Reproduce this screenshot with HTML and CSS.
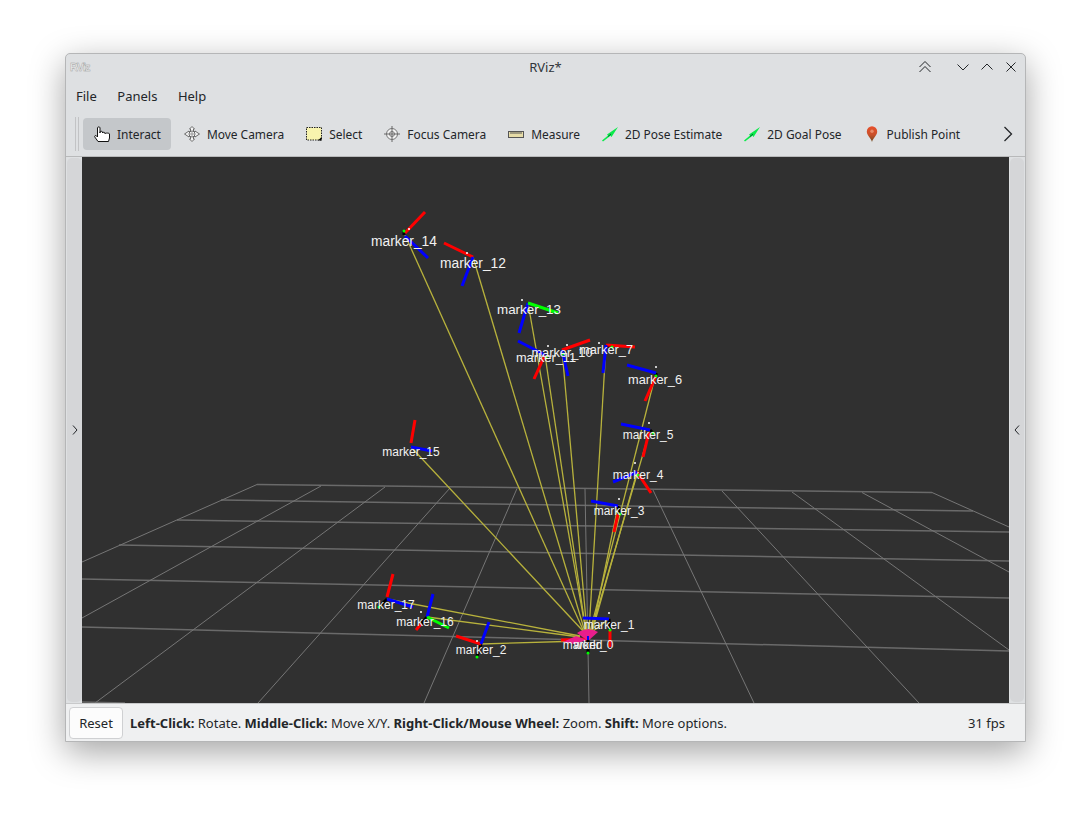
FILE: index.html
```html
<!DOCTYPE html>
<html lang="en">
<head>
    <meta charset="UTF-8">
    <title>RViz*</title>
    <link rel="stylesheet" href="styles.css">
</head>
<body>
<div class="window">
    <!-- title bar -->
    <div class="titlebar">
        <span class="app-logo">RViz</span>
        <span class="title">RViz*</span>
        <div class="win-buttons">
            <svg class="win-btn keep" width="14" height="14" viewBox="0 0 14 14"><path d="M1.5 7 7 1.5 12.5 7M1.5 12 7 6.5 12.5 12"/></svg>
            <svg class="win-btn" width="14" height="14" viewBox="0 0 14 14"><path d="M1.5 4.5 7 10 12.5 4.5"/></svg>
            <svg class="win-btn" width="14" height="14" viewBox="0 0 14 14"><path d="M1.5 9.5 7 4 12.5 9.5"/></svg>
            <svg class="win-btn" width="14" height="14" viewBox="0 0 14 14"><path d="M2.5 2.5 11.5 11.5M11.5 2.5 2.5 11.5"/></svg>
        </div>
    </div>

    <div class="menubar">
        <span>File</span>
        <span>Panels</span>
        <span>Help</span>
    </div>

    <div class="toolbar">
        <div class="grip"></div>
        <div class="tool active">
            <svg width="16" height="16" viewBox="0 0 16 16"><path d="M4 15.5 .8 11C.2 10 1.500 9 2.400 9.800L3.500 11V1.800C3.500 .6 6 .6 6 1.800V7 6C6 5 8.500 5 8.500 6V7C8.500 6 11 6 11 7V7.800C11 6.800 15.500 6.800 15.500 8V12L14.500 15.500Z" fill="#fff" stroke="#111"/></svg>
            <span>Interact</span>
        </div>
        <div class="tool">
            <svg width="16" height="16" viewBox="0 0 16 16" fill="none" stroke="#6a6a6a"><path d="M8 .5 10.500 3H9.500V5L11 6V5L15.500 8 11 11V10L9.500 11V13H10.500L8 15.500 5.500 13H6.500V11L5 10V11L.5 8 5 5V6L6.500 5V3H5.500Z" fill="#f4f4f4"/><circle cx="8" cy="8" r="3"/><path d="M5 8H11M8 5V11" stroke="#999"/></svg>
            <span>Move Camera</span>
        </div>
        <div class="tool">
            <svg width="16" height="16" viewBox="0 0 16 16"><rect x=".5" y="1.500" width="15" height="12.500" fill="#f8f4ae" stroke="#222" stroke-dasharray="1.500 1"/><path d="M12 14.500H15.500V11Z" fill="#000"/></svg>
            <span>Select</span>
        </div>
        <div class="tool">
            <svg width="16" height="16" viewBox="0 0 16 16" fill="none" stroke="#777"><circle cx="8" cy="8" r="5.500" fill="#f2f2f2"/><circle cx="8" cy="8" r="2.500"/><path d="M8 0V16M0 8H16" stroke="#666"/></svg>
            <span>Focus Camera</span>
        </div>
        <div class="tool">
            <svg width="16" height="16" viewBox="0 0 16 16"><rect x=".5" y="5.500" width="15" height="6" fill="#e6dca8" stroke="#555"/><path d="M3 6V8M5 6V8M7 6V8M9 6V8M11 6V8M13 6V8" stroke="#555"/></svg>
            <span>Measure</span>
        </div>
        <div class="tool">
            <svg width="16" height="16" viewBox="0 0 16 16"><path d="M0 14.500 6 9.500 5 8.500 16 1 9.500 11 8.500 9.800 1 15.500Z" fill="#0bea4a"/><path d="M6 10.500 9 8" stroke="#063"/></svg>
            <span>2D Pose Estimate</span>
        </div>
        <div class="tool">
            <svg width="16" height="16" viewBox="0 0 16 16"><path d="M0 14.500 6 9.500 5 8.500 16 1 9.500 11 8.500 9.800 1 15.500Z" fill="#0bea4a"/><path d="M6 10.500 9 8" stroke="#063"/></svg>
            <span>2D Goal Pose</span>
        </div>
        <div class="tool pin">
            <svg width="12" height="16" viewBox="0 0 12 16"><defs><linearGradient id="pin" x1="0" y1="0" x2="0" y2="1"><stop offset="0" stop-color="#e8502c"/><stop offset=".55" stop-color="#c8502a"/><stop offset="1" stop-color="#6a4a20"/></linearGradient></defs><path d="M6 16C5 12 .8 9.500 .8 5.500A5.200 5.200 0 0 1 11.200 5.500C11.200 9.500 7 12 6 16Z" fill="url(#pin)"/><circle cx="6" cy="5.200" r="1.700" fill="#e88a68"/></svg>
            <span>Publish Point</span>
        </div>
        <svg class="more" width="10" height="16" viewBox="0 0 10 16"><path d="M1.500 1 8.500 8 1.500 15"/></svg>
    </div>

    <div class="main">
        <div class="dock-handle">
            <svg width="6" height="10" viewBox="0 0 6 10"><path d="M1 .5 5 5 1 9.500"/></svg>
        </div>

        <svg class="viewport" width="927" height="546" viewBox="82 157 927 546">
            <g class="grid-h">
                <line x1="257" y1="484.500" x2="932" y2="492.500"/>
                <line x1="221" y1="500" x2="973" y2="511"/>
                <line x1="177" y1="520" x2="1009" y2="532"/>
                <line x1="119" y1="545" x2="1009" y2="561"/>
                <line x1="82" y1="579" x2="1009" y2="598"/>
                <line x1="82" y1="627" x2="1009" y2="651"/>
                <line x1="82" y1="702" x2="125" y2="703"/>
            </g>
            <g class="grid-v">
                <line x1="257" y1="484.500" x2="82" y2="562"/>
                <line x1="321" y1="486" x2="82" y2="618"/>
                <line x1="385" y1="487" x2="95" y2="703"/>
                <line x1="450" y1="488" x2="258" y2="703"/>
                <line x1="517" y1="488.500" x2="424" y2="703"/>
                <line x1="585" y1="489" x2="589" y2="703"/>
                <line x1="653" y1="490" x2="754" y2="703"/>
                <line x1="722" y1="491" x2="919" y2="703"/>
                <line x1="792" y1="492" x2="1009" y2="650"/>
                <line x1="862" y1="492.500" x2="1009" y2="572"/>
                <line x1="932" y1="492.500" x2="1009" y2="527"/>
            </g>

            <!-- links from the base to each marker -->
            <g class="links">
                <line x1="405" y1="235" x2="584" y2="632"/>
                <line x1="473" y1="257" x2="585" y2="632"/>
                <line x1="528" y1="303" x2="586" y2="632"/>
                <line x1="545" y1="355" x2="586" y2="632"/>
                <line x1="562" y1="350" x2="587" y2="632"/>
                <line x1="606" y1="345" x2="589" y2="632"/>
                <line x1="656" y1="373" x2="590" y2="632"/>
                <line x1="650" y1="430" x2="591" y2="632"/>
                <line x1="637" y1="472" x2="592" y2="632"/>
                <line x1="618" y1="506" x2="592" y2="632"/>
                <line x1="609" y1="619" x2="592" y2="632"/>
                <line x1="411" y1="447" x2="584" y2="632"/>
                <line x1="387" y1="599" x2="580" y2="636"/>
                <line x1="427" y1="617" x2="580" y2="637"/>
                <line x1="481" y1="644" x2="582" y2="641"/>
            </g>

            <g class="axis-k">
                <line x1="404" y1="235" x2="404" y2="231"/>
                <line x1="481" y1="644" x2="477" y2="656"/>
                <line x1="387" y1="599" x2="379" y2="607"/>
                <line x1="545" y1="355" x2="546" y2="357"/>
                <line x1="562" y1="350" x2="563" y2="354"/>
                <line x1="606" y1="345" x2="612" y2="347"/>
                <line x1="656" y1="373" x2="656" y2="376"/>
                <line x1="650" y1="430" x2="653" y2="433"/>
                <line x1="637" y1="472" x2="638" y2="475"/>
                <line x1="618" y1="506" x2="620" y2="514"/>
                <line x1="609" y1="619" x2="610" y2="630"/>
                <line x1="427" y1="617" x2="421" y2="624"/>
            </g>
            <g class="axis-r">
                <line x1="405" y1="233" x2="425" y2="212"/>
                <line x1="473" y1="257" x2="444" y2="243"/>
                <line x1="545" y1="355" x2="534" y2="379"/>
                <line x1="562" y1="350" x2="590" y2="340"/>
                <line x1="606" y1="345" x2="635" y2="347"/>
                <line x1="656" y1="376" x2="645" y2="401"/>
                <line x1="649" y1="432" x2="643" y2="457"/>
                <line x1="637" y1="472" x2="651" y2="493"/>
                <line x1="618" y1="514" x2="614" y2="532"/>
                <line x1="411" y1="443" x2="415" y2="420"/>
                <line x1="387" y1="597" x2="393" y2="574"/>
                <line x1="481" y1="644" x2="456" y2="636"/>
                <line x1="610" y1="630" x2="610" y2="647"/>
                <line x1="588" y1="639" x2="561" y2="640"/>
                <line x1="421" y1="624" x2="416" y2="630"/>
            </g>
            <g class="axis-b">
                <line x1="405" y1="236" x2="428" y2="258"/>
                <line x1="473" y1="257" x2="462" y2="286"/>
                <line x1="528" y1="303" x2="519" y2="333"/>
                <line x1="545" y1="355" x2="518" y2="341"/>
                <line x1="562" y1="350" x2="568" y2="376"/>
                <line x1="606" y1="345" x2="603" y2="373"/>
                <line x1="656" y1="373" x2="627" y2="365"/>
                <line x1="650" y1="430" x2="621" y2="424"/>
                <line x1="637" y1="472" x2="613" y2="482"/>
                <line x1="618" y1="506" x2="591" y2="501"/>
                <line x1="411" y1="447" x2="432" y2="451"/>
                <line x1="387" y1="599" x2="413" y2="607"/>
                <line x1="427" y1="617" x2="433" y2="594"/>
                <line x1="481" y1="644" x2="489" y2="622"/>
                <line x1="609" y1="619" x2="583" y2="618"/>
            </g>
            <g class="axis-g">
                <line x1="528" y1="303" x2="558" y2="313"/>
                <line x1="427" y1="617" x2="449" y2="628"/>
            </g>

            <!-- pink arrows at the base -->
            <path class="arrow" d="M577 633Q588 626 598 632L588 641Z"/>
            <path class="arrow" d="M563 642 576 636 587 640 575 644Z"/>
            <g class="axis-k">
                <line x1="588" y1="640" x2="588" y2="653"/>
            </g>
            <line class="base-z" x1="588" y1="636" x2="588" y2="640"/>

            <g class="dots-g">
                <circle cx="404" cy="231" r="1.500"/>
                <circle cx="546" cy="357" r="1.500"/>
                <circle cx="563" cy="354" r="1.500"/>
                <circle cx="612" cy="347" r="1.500"/>
                <circle cx="656" cy="376" r="1.500"/>
                <circle cx="653" cy="433" r="1.500"/>
                <circle cx="638" cy="475" r="1.500"/>
                <circle cx="620" cy="514" r="1.500"/>
                <circle cx="379" cy="607" r="1.500"/>
                <circle cx="477" cy="657" r="1.500"/>
                <circle cx="610" cy="630" r="1.500"/>
                <circle cx="588" cy="653" r="1.500"/>
            </g>
            <g class="dots-w">
                <circle cx="409" cy="229" r="1"/>
                <circle cx="467" cy="253" r="1"/>
                <circle cx="522" cy="300" r="1"/>
                <circle cx="548" cy="346" r="1"/>
                <circle cx="567" cy="345" r="1"/>
                <circle cx="599" cy="343" r="1"/>
                <circle cx="656" cy="367" r="1"/>
                <circle cx="649" cy="423" r="1"/>
                <circle cx="635" cy="463" r="1"/>
                <circle cx="619" cy="499" r="1"/>
                <circle cx="609" cy="613" r="1"/>
                <circle cx="421" cy="612" r="1"/>
                <circle cx="477" cy="641" r="1"/>
            </g>

            <g class="labels">
                <text class="s14" x="404" y="246">marker_14</text>
                <text class="s14" x="473" y="268">marker_12</text>
                <text class="s135" x="529" y="314">marker_13</text>
                <text class="s13" x="546" y="362">marker_11</text>
                <text class="s13" x="562" y="357">marker_10</text>
                <text class="s13" x="606" y="354">marker_7</text>
                <text class="s13" x="655" y="384">marker_6</text>
                <text x="648" y="439">marker_5</text>
                <text x="638" y="479">marker_4</text>
                <text x="619" y="515">marker_3</text>
                <text x="411" y="456">marker_15</text>
                <text x="386" y="609">marker_17</text>
                <text x="425" y="626">marker_16</text>
                <text x="481" y="654">marker_2</text>
                <text x="609" y="629">marker_1</text>
                <text x="588" y="649">marker_0</text>
                <text x="588" y="649">world</text>
            </g>
        </svg>

        <div class="dock-handle">
            <svg width="6" height="10" viewBox="0 0 6 10"><path d="M5 .5 1 5 5 9.500"/></svg>
        </div>
    </div>

    <div class="statusbar">
        <button class="reset">Reset</button>
        <span class="hint"><b>Left-Click:</b> Rotate. <b>Middle-Click:</b> Move X/Y. <b>Right-Click/Mouse Wheel:</b> Zoom. <b>Shift:</b> More options.</span>
        <span class="fps">31 fps</span>
    </div>
</div>
</body>
</html>
```

FILE: styles.css
```css
html {
    height: 100%;
}

body {
    box-sizing: border-box;
    height: 820px;
    margin: 0;
    padding: 53px 0 0 65px;
    overflow: hidden;
    background-color: #fff;
    font-family: "Noto Sans", sans-serif;
    font-size: 13px;
    color: #232629;
}

.window {
    box-sizing: border-box;
    width: 961px;
    height: 689px;
    display: flex;
    flex-direction: column;
    background-color: #dee0e2;
    border: 1px solid #b5b6b7;
    border-radius: 5px 5px 0 0;
    box-shadow: 0 10px 34px rgba(0, 0, 0, 0.36);
}

/* title bar */
.titlebar {
    box-sizing: border-box;
    height: 29px;
    flex: none;
    display: flex;
    align-items: center;
    position: relative;
    padding: 0 7px 4px 4px;
}

.app-logo {
    font-family: "Liberation Sans", sans-serif;
    font-size: 11px;
    font-weight: bold;
    letter-spacing: -1px;
    color: #eeeeee;
    -webkit-text-stroke: 0.4px #9a9a9a;
}

.title {
    position: absolute;
    left: 0;
    right: 0;
    text-align: center;
    color: #31363b;
}

.win-buttons {
    margin-left: auto;
    display: flex;
    gap: 10px;
}

.win-btn {
    fill: none;
    stroke: #232629;
    stroke-width: 1;
}

.keep {
    margin-right: 14px;
}

/* menu */
.menubar {
    box-sizing: border-box;
    height: 24px;
    flex: none;
    display: flex;
    align-items: center;
    gap: 20.5px;
    padding: 2px 0 0 10px;
}

/* toolbar */
.toolbar {
    box-sizing: border-box;
    height: 40px;
    margin-top: 9px;
    flex: none;
    display: flex;
    align-items: center;
    padding: 0 0 5px 9px;
    font-size: 11.95px;
    white-space: nowrap;
}

.grip {
    width: 2px;
    height: 34px;
    margin-right: 4px;
    border-left: 1px solid #c2c3c5;
    border-right: 1px solid #c2c3c5;
}

.tool {
    height: 32px;
    flex: none;
    display: flex;
    align-items: center;
    gap: 7px;
    padding: 0 11px;
    border-radius: 4px;
}

.tool span {
    padding-top: 1px;
}

.tool svg {
    flex: none;
}

.tool.active {
    background-color: #c4c7ca;
    padding-right: 10px;
    margin-right: 2px;
}

.tool.pin svg {
    margin: 0 2px;
}

.more {
    flex: none;
    margin-left: auto;
    margin-right: 12px;
    fill: none;
    stroke: #232629;
    stroke-width: 1.3;
}

/* 3d view and docks */
.main {
    flex: none;
    display: flex;
    border-top: 1px solid #b8b9ba;
}

.viewport {
    display: block;
    background-color: #303030;
    flex: none;
}

.dock-handle {
    flex: none;
    width: 15px;
    margin: 1px 0 1px 1px;
    background-color: #d5d6d8;
    border-radius: 5px;
    display: flex;
    align-items: center;
    justify-content: center;
}

.dock-handle:last-child {
    width: 14px;
    margin: 1px;
}

.dock-handle svg {
    fill: none;
    stroke: #232629;
    stroke-width: 1;
}

.grid-h line {
    stroke: #6a6a6a;
    stroke-width: 1.5;
}

.grid-v line {
    stroke: #767676;
    stroke-width: 1;
}

.links line {
    stroke: #b8b23c;
    stroke-width: 1.3;
}

.axis-r line,
.axis-b line,
.axis-g line,
.axis-k line {
    stroke-width: 3;
}

.axis-r line {
    stroke: #f00;
}

.axis-b line {
    stroke: #00f;
}

.axis-g line {
    stroke: #0f0;
}

.axis-k line {
    stroke: #000;
}

.arrow {
    fill: #e91e8c;
}

.base-z {
    stroke: #00f;
    stroke-width: 2;
}

.dots-g circle {
    fill: #0f0;
}

.dots-w circle {
    fill: #fff;
}

.labels text {
    font-family: "Liberation Sans", Arial, sans-serif;
    font-size: 12px;
    fill: #f2f2f2;
    text-anchor: middle;
}

.labels .s13 {
    font-size: 12.8px;
}

.labels .s135 {
    font-size: 13.4px;
}

.labels .s14 {
    font-size: 13.8px;
}

/* status bar */
.statusbar {
    flex: 1;
    display: flex;
    align-items: center;
    background-color: #eff0f1;
    border-top: 1px solid #c8c9ca;
    padding: 0 20px 0 3px;
}

.reset {
    width: 54px;
    height: 32px;
    margin-right: 7px;
    padding: 0;
    font-family: inherit;
    font-size: 13px;
    color: #232629;
    background-color: #fcfcfc;
    border: 1px solid #cfd0d2;
    border-radius: 4px;
}

.fps {
    margin-left: auto;
}
```
